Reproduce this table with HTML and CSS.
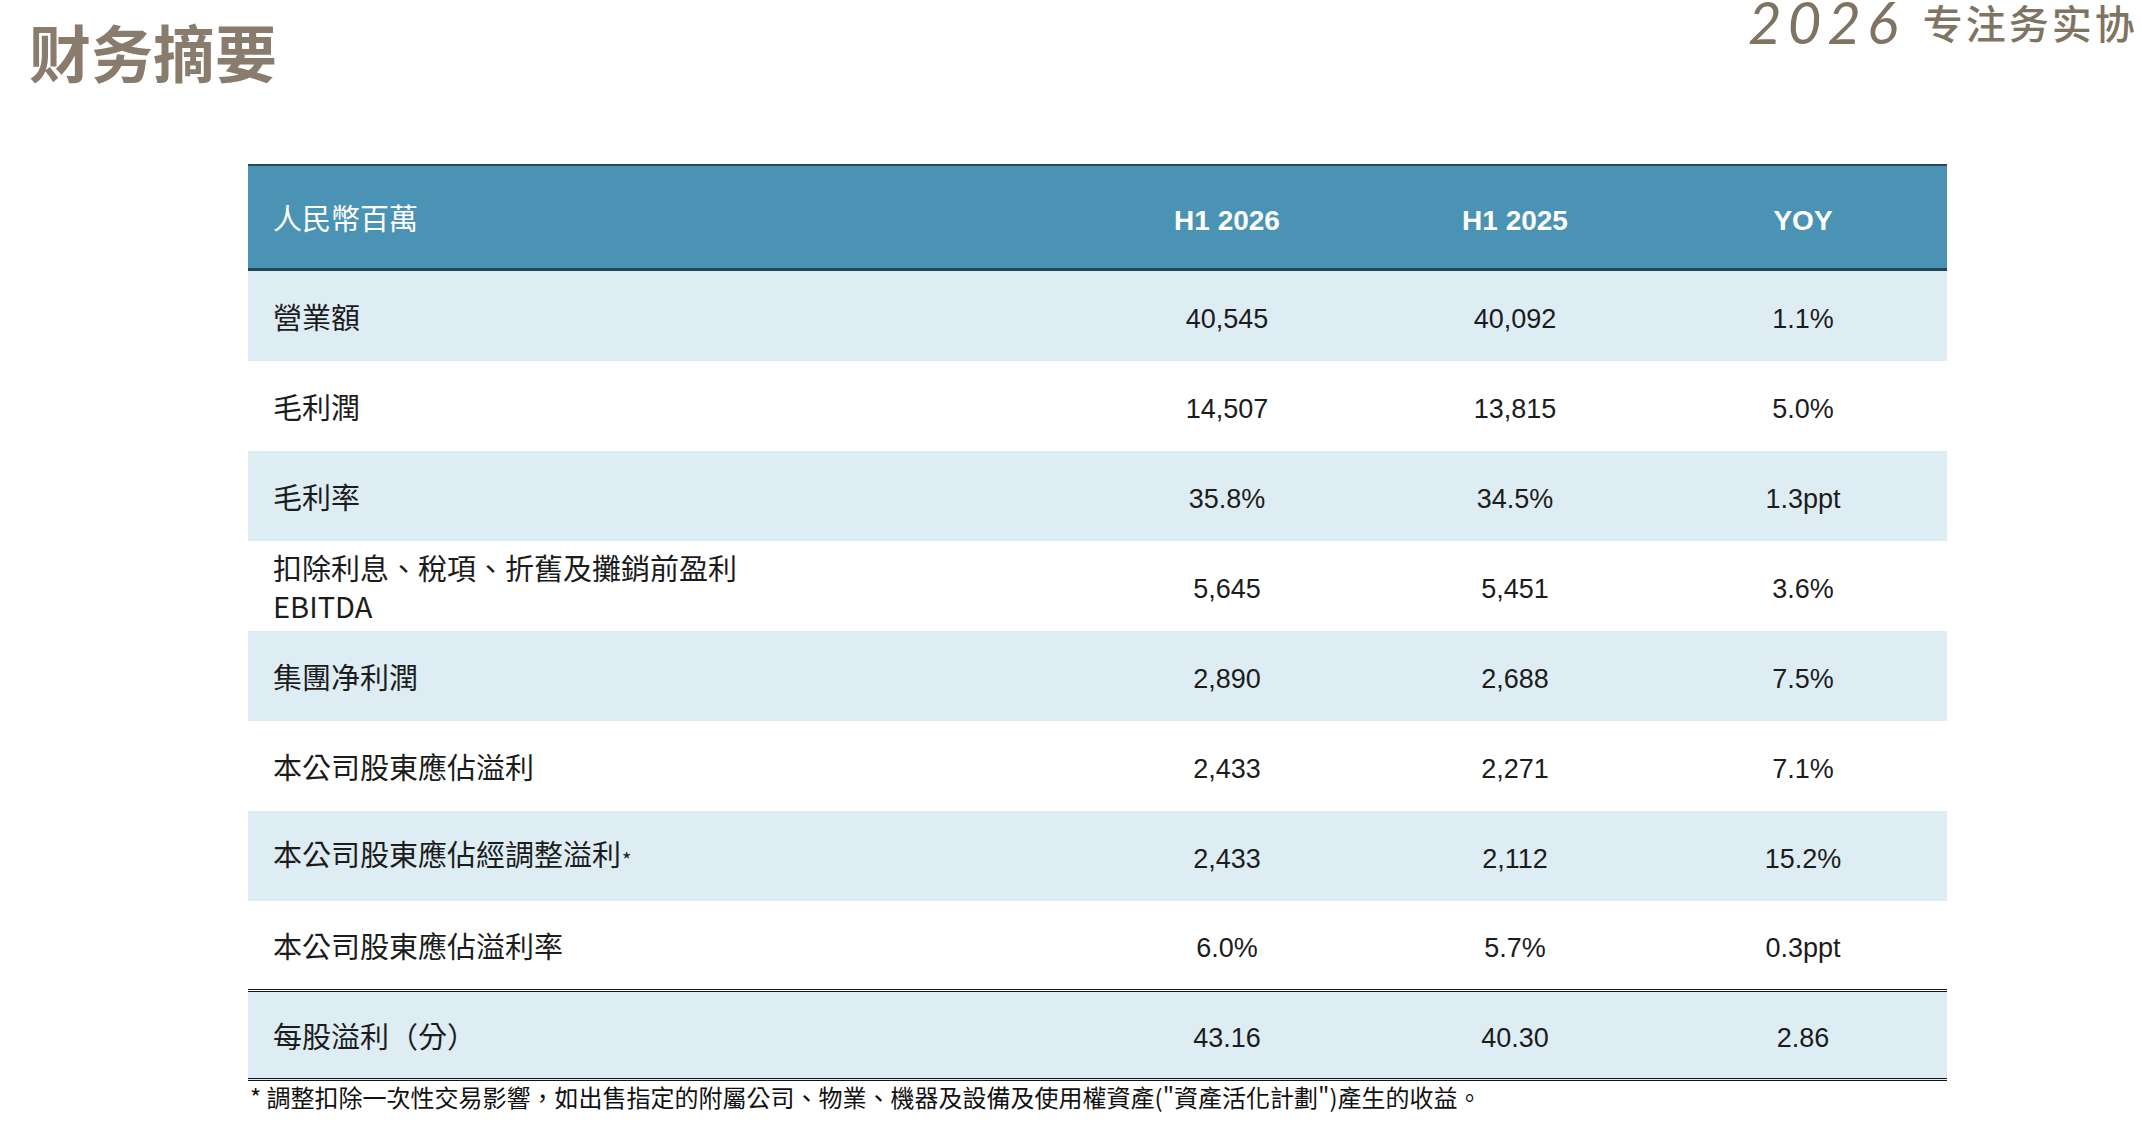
FILE: index.html
```html
<!DOCTYPE html>
<html lang="zh-Hant">
<head>
<meta charset="utf-8">
<title>财务摘要</title>
<link rel="stylesheet" href="styles.css">
</head>
<body>
<div class="page">
  <header class="top">
    <h1 class="title" lang="zh-Hans">财务摘要</h1>
    <div class="slogan" lang="zh-Hans"><span class="slogan-year">2026</span> <span class="slogan-cjk">专注务实协</span></div>
  </header>

  <section class="summary">
    <div class="grid-row head">
      <div class="cell label">人民幣百萬</div>
      <div class="cell num">H1 2026</div>
      <div class="cell num">H1 2025</div>
      <div class="cell num">YOY</div>
    </div>
    <div class="grid-row shade">
      <div class="cell label">營業額</div>
      <div class="cell num">40,545</div>
      <div class="cell num">40,092</div>
      <div class="cell num">1.1%</div>
    </div>
    <div class="grid-row">
      <div class="cell label">毛利潤</div>
      <div class="cell num">14,507</div>
      <div class="cell num">13,815</div>
      <div class="cell num">5.0%</div>
    </div>
    <div class="grid-row shade">
      <div class="cell label">毛利率</div>
      <div class="cell num">35.8%</div>
      <div class="cell num">34.5%</div>
      <div class="cell num">1.3ppt</div>
    </div>
    <div class="grid-row">
      <div class="cell label two-line">扣除利息、稅項、折舊及攤銷前盈利<br>EBITDA</div>
      <div class="cell num">5,645</div>
      <div class="cell num">5,451</div>
      <div class="cell num">3.6%</div>
    </div>
    <div class="grid-row shade">
      <div class="cell label">集團净利潤</div>
      <div class="cell num">2,890</div>
      <div class="cell num">2,688</div>
      <div class="cell num">7.5%</div>
    </div>
    <div class="grid-row">
      <div class="cell label">本公司股東應佔溢利</div>
      <div class="cell num">2,433</div>
      <div class="cell num">2,271</div>
      <div class="cell num">7.1%</div>
    </div>
    <div class="grid-row shade">
      <div class="cell label">本公司股東應佔經調整溢利<span class="star">*</span></div>
      <div class="cell num">2,433</div>
      <div class="cell num">2,112</div>
      <div class="cell num">15.2%</div>
    </div>
    <div class="grid-row pre-total">
      <div class="cell label">本公司股東應佔溢利率</div>
      <div class="cell num">6.0%</div>
      <div class="cell num">5.7%</div>
      <div class="cell num">0.3ppt</div>
    </div>
    <div class="grid-row shade total">
      <div class="cell label">每股溢利（分）</div>
      <div class="cell num">43.16</div>
      <div class="cell num">40.30</div>
      <div class="cell num">2.86</div>
    </div>
    <p class="footnote">* 調整扣除一次性交易影響，如出售指定的附屬公司、物業、機器及設備及使用權資產("資產活化計劃")產生的收益。</p>
  </section>
</div>
</body>
</html>
```

FILE: styles.css
```css
html, body {
  margin: 0;
  padding: 0;
  background: #ffffff;
}

body {
  width: 2142px;
  height: 1146px;
  overflow: hidden;
  font-family: "Noto Sans CJK TC", "Noto Sans CJK SC", sans-serif;
  color: #1c1c1c;
}

.page {
  display: flex;
  flex-direction: column;
}

.top {
  display: flex;
  align-items: flex-start;
  height: 164px;
}

.title {
  margin: 20px 0 0 29px;
  font-family: "Noto Sans CJK SC", sans-serif;
  font-size: 62px;
  line-height: 62px;
  font-weight: 700;
  color: #8a7c6c;
}

.slogan {
  margin-left: auto;
  width: 394px;
  overflow: hidden;
  white-space: nowrap;
  font-family: "Lato", "DejaVu Sans", sans-serif;
  font-size: 58px;
  line-height: 44px;
  color: #7f7361;
}

.slogan-year {
  font-style: italic;
  font-weight: 400;
  letter-spacing: 6px;
}

.slogan-cjk {
  font-family: "Noto Sans CJK SC", sans-serif;
  font-weight: 500;
  font-size: 40px;
  letter-spacing: 3px;
  vertical-align: 5px;
  margin-left: 4px;
}

.summary {
  margin-left: 248px;
  width: 1699px;
  display: flex;
  flex-direction: column;
}

.grid-row {
  display: grid;
  grid-template-columns: 835px 288px 288px 288px;
  height: 90px;
  box-sizing: border-box;
  align-items: center;
  background: #ffffff;
}

.grid-row.shade {
  background: #deedf3;
}

.grid-row.head {
  height: 107px;
  background: #4a93b4;
  border-top: 2px solid #27495a;
  border-bottom: 3px solid #234657;
  color: #ffffff;
}

.grid-row.pre-total {
  height: 91px;
  border-bottom: 3px double #141414;
}

.grid-row.total {
  height: 89px;
  border-bottom: 3px double #141414;
}

.cell.label {
  padding-left: 25px;
  font-size: 29px;
  line-height: 38px;
}

.cell.num {
  padding-top: 6px;
  text-align: center;
  font-family: "Liberation Sans", Arial, sans-serif;
  font-size: 27px;
  line-height: 38px;
}

.head .cell.num {
  padding-top: 8px;
  font-weight: 700;
  font-size: 28px;
}

.star {
  font-size: 20px;
  vertical-align: -2px;
  margin-left: 1px;
}

.footnote {
  margin: 2px 0 0 2px;
  font-family: "Noto Sans CJK TC", sans-serif;
  font-size: 24px;
  line-height: 28px;
  color: #111111;
  white-space: nowrap;
}
```
